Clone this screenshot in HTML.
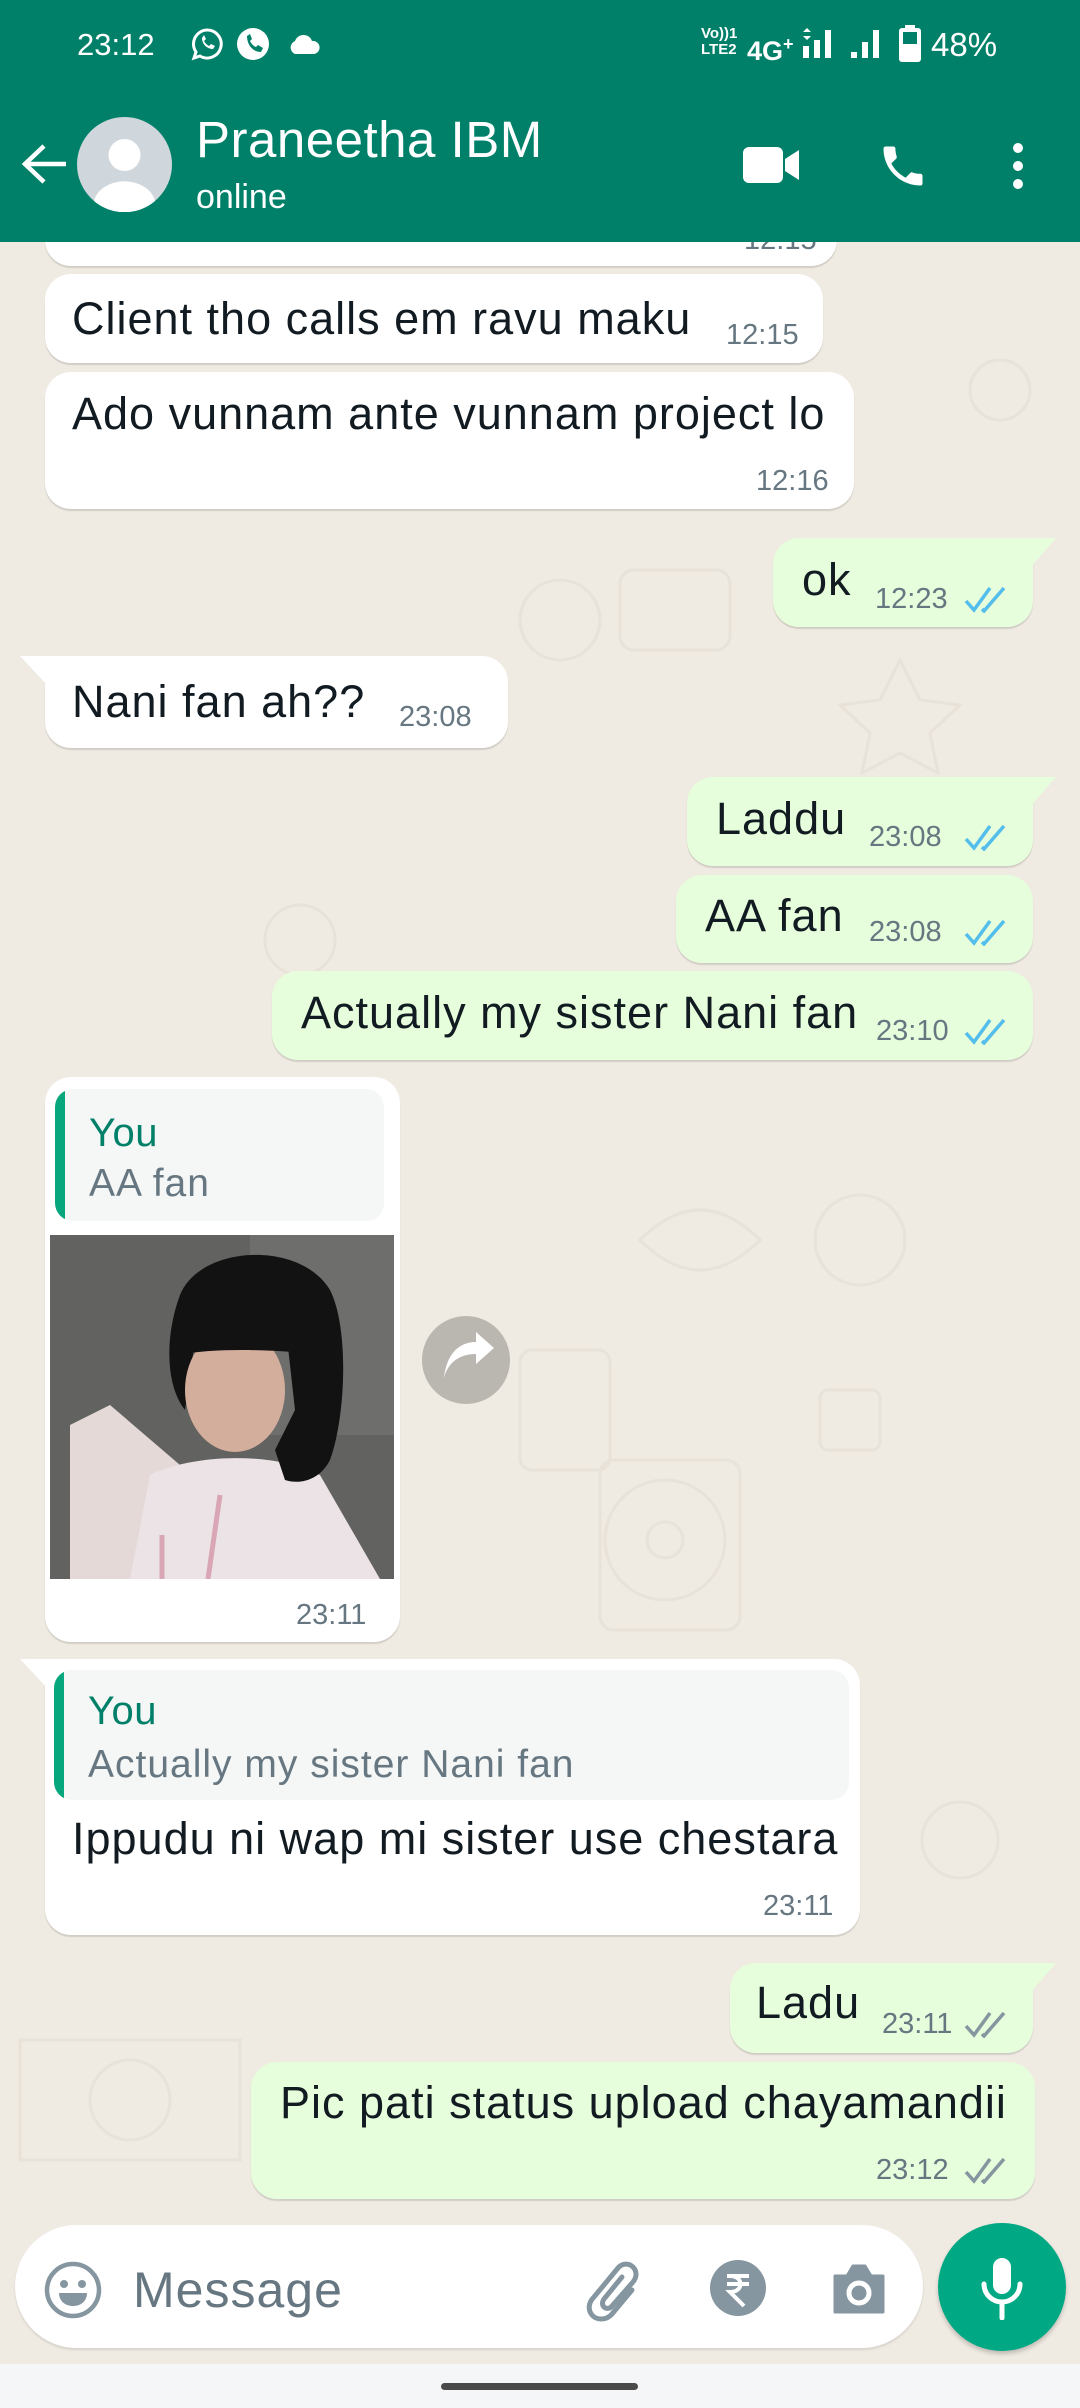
<!DOCTYPE html>
<html><head><meta charset="utf-8"><style>
*{margin:0;padding:0;box-sizing:border-box}
body{width:1080px;height:2408px;overflow:hidden;background:#efeae2;font-family:"Liberation Sans",Roboto,sans-serif;position:relative}
.a{position:absolute;white-space:nowrap}
.b{position:absolute;border-radius:26px;box-shadow:0 2px 1px rgba(0,0,0,.12)}
.in{background:#fff}
.out{background:#e6fedb}
.t{position:absolute;white-space:nowrap;font-size:45px;letter-spacing:1px;color:#111b21;line-height:50px}
.tm{position:absolute;white-space:nowrap;font-size:29px;color:#667781;line-height:36px}
.q1{position:absolute;white-space:nowrap;font-size:40px;letter-spacing:.5px;color:#008069;line-height:44px}
.q2{position:absolute;white-space:nowrap;font-size:39px;letter-spacing:1px;color:#667781;line-height:44px}
.tk{position:absolute}
</style></head><body>
<svg class="a" style="left:0;top:240px" width="1080" height="2130" fill="none" stroke="#e8e2d8" stroke-width="3">
<circle cx="1000" cy="150" r="30"/><circle cx="560" cy="380" r="40"/><rect x="620" y="330" width="110" height="80" rx="14"/>
<circle cx="300" cy="700" r="35"/><path d="M900 420 l20 40 l40 5 l-30 28 l8 40 l-38 -20 l-38 20 l8 -40 l-30 -28 l40 -5z"/>
<rect x="520" y="1110" width="90" height="120" rx="12"/><circle cx="665" cy="1300" r="60"/><circle cx="665" cy="1300" r="18"/>
<rect x="600" y="1220" width="140" height="170" rx="14"/><path d="M640 1000 q60 -60 120 0 q-60 60 -120 0z"/>
<rect x="820" y="1150" width="60" height="60" rx="8"/><path d="M20 1800 h220 v120 h-220z"/><circle cx="130" cy="1860" r="40"/>
<circle cx="860" cy="1000" r="45"/><circle cx="960" cy="1600" r="38"/>
</svg>

<!-- partial top bubble (under header) -->
<div class="b in" style="left:45px;top:200px;width:792px;height:66px"></div>
<div class="tm" style="left:744px;top:222px">12:15</div>

<!-- header -->
<div class="a" style="left:0;top:0;width:1080px;height:242px;background:#008069"></div>
<div class="a" style="left:77px;top:27px;font-size:31px;color:#fff;line-height:36px">23:12</div>
<svg class="a" style="left:190px;top:27px" width="34" height="34" viewBox="0 0 34 34" fill="none" stroke="#fff" stroke-width="3"><path d="M17 3a14 14 0 1 1-7 26l-6 2l2-6A14 14 0 0 1 17 3z"/><path d="M12 11c0 6 5 11 11 11l2-3-4-2-2 2c-2-1-4-3-5-5l2-2-2-4z" fill="#fff" stroke="none"/></svg>
<svg class="a" style="left:236px;top:27px" width="34" height="34" viewBox="0 0 34 34"><circle cx="17" cy="17" r="16" fill="#fff"/><path d="M11 9c0 9 6 16 14 16l2-4-5-3-2 2c-3-1-5-4-6-6l2-2-2-5z" fill="#008069"/></svg>
<svg class="a" style="left:287px;top:32px" width="34" height="24" viewBox="0 0 34 24"><path d="M8 22a7 7 0 0 1 0-13a9 9 0 0 1 17 0a6.5 6.5 0 0 1 2 13z" fill="#fff"/></svg>
<div class="a" style="left:701px;top:26px;font-size:15px;font-weight:bold;color:#fff;line-height:16px">Vo))1<br>LTE2</div>
<div class="a" style="left:747px;top:28px;font-size:27px;font-weight:bold;color:#fff;line-height:32px">4G<sup style="font-size:18px">+</sup></div>
<svg class="a" style="left:800px;top:28px" width="34" height="32"><path d="M3 4l4-4 4 4zM3 8l4 4 4-4z" fill="#fff"/><rect x="3" y="18" width="6" height="12" fill="#fff"/><rect x="14" y="12" width="6" height="18" fill="#fff"/><rect x="25" y="2" width="6" height="28" fill="#fff"/></svg>
<svg class="a" style="left:850px;top:28px" width="32" height="32"><rect x="1" y="24" width="6" height="6" fill="#fff"/><rect x="12" y="14" width="6" height="16" fill="#fff"/><rect x="23" y="2" width="6" height="28" fill="#fff"/></svg>
<svg class="a" style="left:899px;top:25px" width="22" height="37"><rect x="6" y="0" width="10" height="4" fill="#fff"/><rect x="0" y="3" width="22" height="34" rx="3" fill="#fff"/><rect x="4" y="7" width="14" height="12" fill="#008069"/></svg>
<div class="a" style="left:931px;top:26px;font-size:33px;color:#fff;line-height:38px">48%</div>

<svg class="a" style="left:20px;top:143px" width="50" height="42" viewBox="0 0 50 42" fill="none" stroke="#fff" stroke-width="4.5"><path d="M46 21H6M24 3L5 21l19 18"/></svg>
<svg class="a" style="left:77px;top:117px" width="95" height="95" viewBox="0 0 95 95"><circle cx="47.5" cy="47.5" r="47.5" fill="#cfd6dc"/><circle cx="47.5" cy="38" r="16" fill="#fff"/><path d="M17 84a31 24 0 0 1 61 0a47 47 0 0 1-61 0z" fill="#fff"/></svg>
<div class="a" style="left:196px;top:111px;font-size:51px;letter-spacing:.5px;color:#fff;line-height:58px">Praneetha IBM</div>
<div class="a" style="left:196px;top:178px;font-size:34px;color:#fff;line-height:38px">online</div>
<svg class="a" style="left:743px;top:147px" width="58" height="36" viewBox="0 0 58 36"><rect x="0" y="0" width="40" height="36" rx="6" fill="#fff"/><path d="M42 12l14-9v30l-14-9z" fill="#fff"/></svg>
<svg class="a" style="left:877px;top:140px" width="52" height="52" viewBox="0 0 24 24"><path d="M6.6 10.8c1.4 2.8 3.8 5.1 6.6 6.6l2.2-2.2c.3-.3.7-.4 1-.2 1.1.4 2.3.6 3.6.6.6 0 1 .4 1 1V20c0 .6-.4 1-1 1C10.6 21 3 13.4 3 4c0-.6.4-1 1-1h3.5c.6 0 1 .4 1 1 0 1.3.2 2.5.6 3.6.1.3 0 .7-.2 1z" fill="#fff"/></svg>
<svg class="a" style="left:1009px;top:142px" width="18" height="48"><circle cx="9" cy="6" r="5" fill="#fff"/><circle cx="9" cy="24" r="5" fill="#fff"/><circle cx="9" cy="42" r="5" fill="#fff"/></svg>

<div class="b in" style="left:45px;top:274px;width:778px;height:89px"></div>
<div class="t" style="left:72px;top:294px">Client tho calls em ravu maku</div>
<div class="tm" style="left:726px;top:317px">12:15</div>

<div class="b in" style="left:45px;top:372px;width:809px;height:137px"></div>
<div class="t" style="left:72px;top:389px">Ado vunnam ante vunnam project lo</div>
<div class="tm" style="left:756px;top:463px">12:16</div>

<div class="b out" style="left:773px;top:538px;width:260px;height:89px;border-top-right-radius:0"></div>
<svg class="a" style="left:1030px;top:538px" width="26" height="30"><path d="M0 0H26L0 30z" fill="#e6fedb"/></svg>
<div class="t" style="left:802px;top:555px">ok</div>
<div class="tm" style="left:875px;top:581px">12:23</div>
<svg class="tk" style="left:964px;top:585px" width="46" height="28" viewBox="0 0 46 28" fill="none" stroke="#53bdeb" stroke-width="3.5"><path d="M2 16l8 9L26 3M18 24l2 2L40 3"/></svg>

<div class="b in" style="left:45px;top:656px;width:463px;height:92px;border-top-left-radius:0"></div>
<svg class="a" style="left:20px;top:656px" width="28" height="30"><path d="M28 0H0L28 30z" fill="#fff"/></svg>
<div class="t" style="left:72px;top:677px">Nani fan ah??</div>
<div class="tm" style="left:399px;top:699px">23:08</div>

<div class="b out" style="left:687px;top:777px;width:346px;height:89px;border-top-right-radius:0"></div>
<svg class="a" style="left:1030px;top:777px" width="26" height="30"><path d="M0 0H26L0 30z" fill="#e6fedb"/></svg>
<div class="t" style="left:716px;top:794px">Laddu</div>
<div class="tm" style="left:869px;top:819px">23:08</div>
<svg class="tk" style="left:964px;top:823px" width="46" height="28" viewBox="0 0 46 28" fill="none" stroke="#53bdeb" stroke-width="3.5"><path d="M2 16l8 9L26 3M18 24l2 2L40 3"/></svg>

<div class="b out" style="left:676px;top:875px;width:357px;height:88px"></div>
<div class="t" style="left:705px;top:891px">AA fan</div>
<div class="tm" style="left:869px;top:914px">23:08</div>
<svg class="tk" style="left:964px;top:918px" width="46" height="28" viewBox="0 0 46 28" fill="none" stroke="#53bdeb" stroke-width="3.5"><path d="M2 16l8 9L26 3M18 24l2 2L40 3"/></svg>

<div class="b out" style="left:272px;top:971px;width:761px;height:89px"></div>
<div class="t" style="left:301px;top:988px">Actually my sister Nani fan</div>
<div class="tm" style="left:876px;top:1013px">23:10</div>
<svg class="tk" style="left:964px;top:1017px" width="46" height="28" viewBox="0 0 46 28" fill="none" stroke="#53bdeb" stroke-width="3.5"><path d="M2 16l8 9L26 3M18 24l2 2L40 3"/></svg>

<div class="b in" style="left:45px;top:1077px;width:355px;height:565px"></div>
<div class="a" style="left:55px;top:1089px;width:329px;height:132px;background:#f5f6f6;border-radius:18px;overflow:hidden"><div style="width:10px;height:100%;background:#06a77d"></div></div>
<div class="q1" style="left:89px;top:1111px">You</div>
<div class="q2" style="left:89px;top:1162px">AA fan</div>
<svg class="a" style="left:50px;top:1235px" width="344" height="344" viewBox="0 0 344 344">
<rect width="344" height="344" fill="#626260"/>
<rect x="200" y="0" width="144" height="200" fill="#6e6e6c"/>
<path d="M20 190l40-20 70 60 10 114H20z" fill="#e4d9d6"/>
<path d="M100 240c40-20 120-25 170 0l60 104H80z" fill="#ebe3e5"/>
<path d="M130 60c20-50 120-55 150-5 20 40 15 130 0 170-10 20-30 25-45 20l-10-30 20-40-10-90-90 20-10 70c-20-25-20-75-5-115z" fill="#121212"/>
<ellipse cx="185" cy="155" rx="50" ry="62" fill="#d4ae9c"/>
<path d="M128 70c30-25 110-25 145 5l0 45c-40-5-105-8-145 0z" fill="#121212"/>
<path d="M112 300v44M170 260l-12 84" stroke="#d9a6b5" stroke-width="5"/>
</svg>
<div class="tm" style="left:296px;top:1597px">23:11</div>
<svg class="a" style="left:422px;top:1316px" width="88" height="88" viewBox="0 0 88 88"><circle cx="44" cy="44" r="44" fill="rgba(0,0,0,.22)"/><path d="M22 62c4-16 16-24 32-24v10l18-16-18-16v10c-20 0-30 16-32 36z" fill="#fff"/></svg>

<div class="b in" style="left:45px;top:1659px;width:815px;height:276px;border-top-left-radius:0"></div>
<svg class="a" style="left:20px;top:1659px" width="28" height="30"><path d="M28 0H0L28 30z" fill="#fff"/></svg>
<div class="a" style="left:54px;top:1670px;width:795px;height:130px;background:#f5f6f6;border-radius:18px;overflow:hidden"><div style="width:10px;height:100%;background:#06a77d"></div></div>
<div class="q1" style="left:88px;top:1689px">You</div>
<div class="q2" style="left:88px;top:1743px">Actually my sister Nani fan</div>
<div class="t" style="left:72px;top:1814px">Ippudu ni wap mi sister use chestara</div>
<div class="tm" style="left:763px;top:1888px">23:11</div>

<div class="b out" style="left:730px;top:1963px;width:303px;height:90px;border-top-right-radius:0"></div>
<svg class="a" style="left:1030px;top:1963px" width="26" height="30"><path d="M0 0H26L0 30z" fill="#e6fedb"/></svg>
<div class="t" style="left:756px;top:1978px">Ladu</div>
<div class="tm" style="left:882px;top:2006px">23:11</div>
<svg class="tk" style="left:964px;top:2010px" width="46" height="28" viewBox="0 0 46 28" fill="none" stroke="#8696a0" stroke-width="3.5"><path d="M2 16l8 9L26 3M18 24l2 2L40 3"/></svg>

<div class="b out" style="left:251px;top:2062px;width:784px;height:137px"></div>
<div class="t" style="left:280px;top:2078px">Pic pati status upload chayamandii</div>
<div class="tm" style="left:876px;top:2152px">23:12</div>
<svg class="tk" style="left:964px;top:2156px" width="46" height="28" viewBox="0 0 46 28" fill="none" stroke="#8696a0" stroke-width="3.5"><path d="M2 16l8 9L26 3M18 24l2 2L40 3"/></svg>

<div class="a" style="left:15px;top:2225px;width:908px;height:123px;background:#fff;border-radius:62px;box-shadow:0 2px 2px rgba(0,0,0,.1)"></div>
<svg class="a" style="left:43px;top:2260px" width="60" height="60" viewBox="0 0 60 60"><circle cx="30" cy="30" r="26" fill="none" stroke="#8696a0" stroke-width="4.5"/><circle cx="21" cy="24" r="4" fill="#8696a0"/><circle cx="39" cy="24" r="4" fill="#8696a0"/><path d="M16 33h28c0 8-6 13-14 13s-14-5-14-13z" fill="#8696a0"/></svg>
<div class="a" style="left:133px;top:2262px;font-size:50px;letter-spacing:1px;color:#667781;line-height:56px">Message</div>
<svg class="a" style="left:586px;top:2258px" width="62" height="66" viewBox="0 0 62 66" fill="none" stroke="#8696a0" stroke-width="5" stroke-linecap="round"><path d="M46 32L26 56c-6 7-16 6-20 1s-4-12 2-18L32 10c4-5 11-5 15-1s4 10 0 15L26 48c-2 3-6 3-8 1s-2-5 0-8l18-22"/></svg>
<svg class="a" style="left:710px;top:2260px" width="56" height="56" viewBox="0 0 56 56"><circle cx="28" cy="28" r="28" fill="#8696a0"/><path d="M17 16h22M17 24h22M20 16c14 0 14 16 0 16l14 14" fill="none" stroke="#fff" stroke-width="4"/></svg>
<svg class="a" style="left:831px;top:2262px" width="56" height="52" viewBox="0 0 56 52"><path d="M4 14h12l6-10h12l6 10h12v36H4z" fill="#8696a0" stroke="#8696a0" stroke-width="3" stroke-linejoin="round"/><circle cx="28" cy="31" r="10" fill="none" stroke="#fff" stroke-width="5"/></svg>
<div class="a" style="left:938px;top:2223px;width:128px;height:128px;border-radius:64px;background:#00a884;box-shadow:0 3px 4px rgba(0,0,0,.2)"></div>
<svg class="a" style="left:978px;top:2256px" width="48" height="64" viewBox="0 0 48 64"><rect x="15" y="2" width="18" height="36" rx="9" fill="#fff"/><path d="M6 28c0 10 8 18 18 18s18-8 18-18M24 46v16" fill="none" stroke="#fff" stroke-width="5" stroke-linecap="round"/></svg>

<div class="a" style="left:0;top:2364px;width:1080px;height:44px;background:#f5f6f7"></div>
<div class="a" style="left:441px;top:2383px;width:197px;height:7px;border-radius:4px;background:#4a4a4a"></div>
</body></html>
